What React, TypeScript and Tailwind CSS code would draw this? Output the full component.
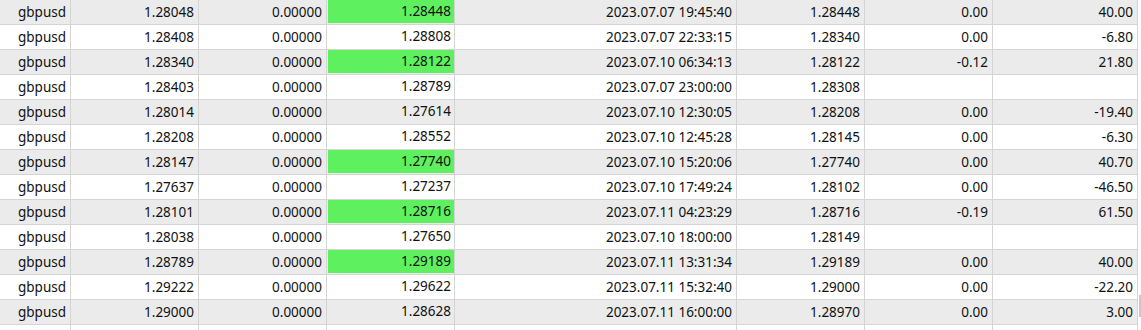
const rows: [string, string, string, string, boolean, string, string, string, string][] = [
  ["gbpusd", "1.28048", "0.00000", "1.28448", true, "2023.07.07 19:45:40", "1.28448", "0.00", "40.00"],
  ["gbpusd", "1.28408", "0.00000", "1.28808", false, "2023.07.07 22:33:15", "1.28340", "0.00", "-6.80"],
  ["gbpusd", "1.28340", "0.00000", "1.28122", true, "2023.07.10 06:34:13", "1.28122", "-0.12", "21.80"],
  ["gbpusd", "1.28403", "0.00000", "1.28789", false, "2023.07.07 23:00:00", "1.28308", "", ""],
  ["gbpusd", "1.28014", "0.00000", "1.27614", false, "2023.07.10 12:30:05", "1.28208", "0.00", "-19.40"],
  ["gbpusd", "1.28208", "0.00000", "1.28552", false, "2023.07.10 12:45:28", "1.28145", "0.00", "-6.30"],
  ["gbpusd", "1.28147", "0.00000", "1.27740", true, "2023.07.10 15:20:06", "1.27740", "0.00", "40.70"],
  ["gbpusd", "1.27637", "0.00000", "1.27237", false, "2023.07.10 17:49:24", "1.28102", "0.00", "-46.50"],
  ["gbpusd", "1.28101", "0.00000", "1.28716", true, "2023.07.11 04:23:29", "1.28716", "-0.19", "61.50"],
  ["gbpusd", "1.28038", "0.00000", "1.27650", false, "2023.07.10 18:00:00", "1.28149", "", ""],
  ["gbpusd", "1.28789", "0.00000", "1.29189", true, "2023.07.11 13:31:34", "1.29189", "0.00", "40.00"],
  ["gbpusd", "1.29222", "0.00000", "1.29622", false, "2023.07.11 15:32:40", "1.29000", "0.00", "-22.20"],
  ["gbpusd", "1.29000", "0.00000", "1.28628", false, "2023.07.11 16:00:00", "1.28970", "0.00", "3.00"],
];

const cols = "grid grid-cols-[71px_128px_128px_128px_282px_128px_128px_145px]";
const cell = "border-r border-[#d4d4d4] pr-[4px] flex items-center justify-end";

function Row({ r, i }: { r: (typeof rows)[number]; i: number }) {
  const [sym, open, sl, tp, hit, time, close, swap, profit] = r;
  return (
    <div className={`${cols} h-[25px] border-b border-[#d4d4d4] ${i % 2 === 0 ? "bg-[#ebebeb]" : "bg-white"}`}>
      <div className={cell}>{sym}</div>
      <div className={cell}>{open}</div>
      <div className={cell}>{sl}</div>
      <div className="border-r border-[#d4d4d4] flex">
        <div className={`flex-1 ml-px mb-px pr-[3px] flex items-center justify-end ${hit ? "bg-[#5ef05e]" : ""}`}>
          {tp}
        </div>
      </div>
      <div className={cell}>{time}</div>
      <div className={cell}>{close}</div>
      <div className={cell}>{swap}</div>
      <div className={cell}>{profit}</div>
    </div>
  );
}

export default function App() {
  return (
    <div
      className="flex w-[1141px] h-[330px] overflow-hidden bg-white text-[13.5px] text-[#111]"
      style={{ fontFamily: '"Noto Sans", "Open Sans", sans-serif' }}
    >
      <div className="w-[1138px] shrink-0">
        {rows.map((r, i) => (
          <Row key={i} r={r} i={i} />
        ))}
        <div className={`${cols} h-[25px]`}>
          {Array.from({ length: 8 }).map((_, k) => (
            <div key={k} className="border-r border-[#d4d4d4]" />
          ))}
        </div>
      </div>
      <div className="flex-1 flex justify-end pt-[295px]">
        <div className="w-[2px] h-[22px] bg-[#c8c8c8]" />
      </div>
    </div>
  );
}
